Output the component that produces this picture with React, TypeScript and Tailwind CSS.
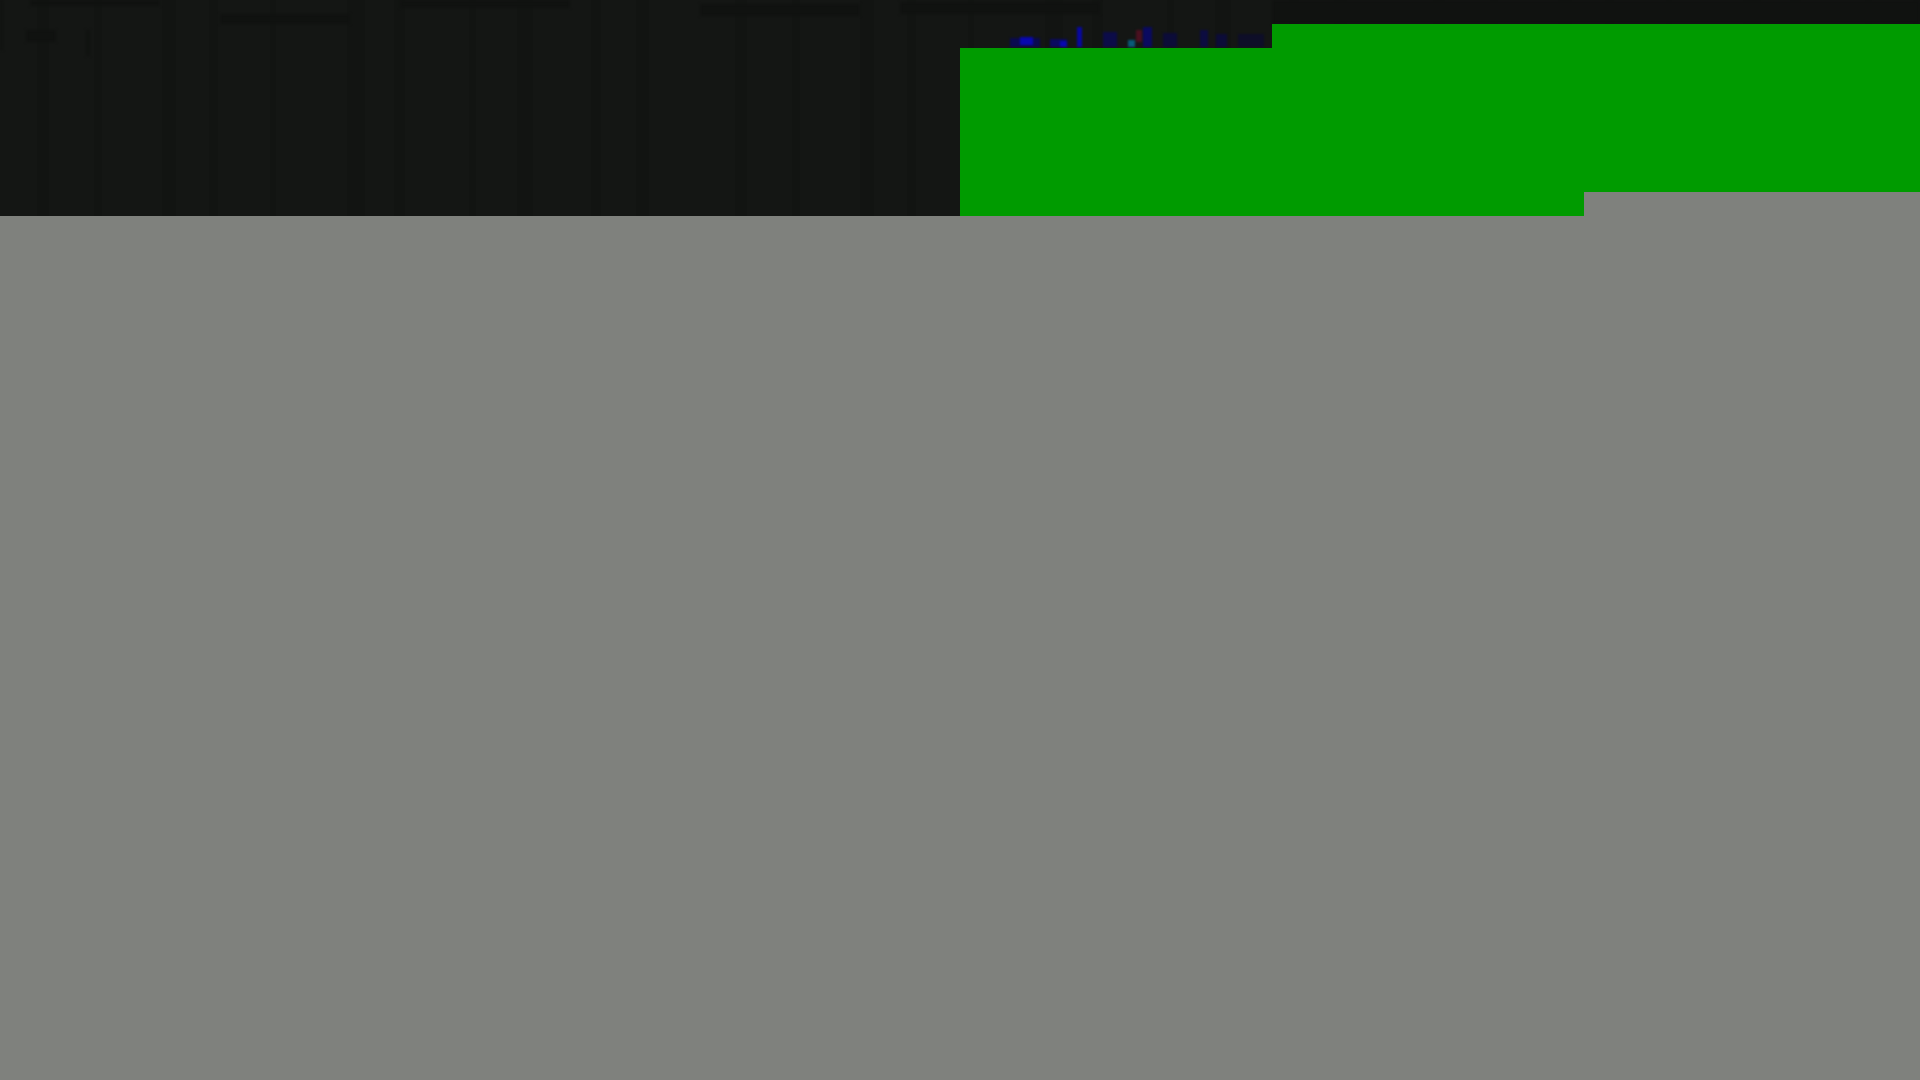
// faint vertical banding in the dark strip, widths are irregular in the source
const bands = [37, 12, 45, 8, 60, 14, 33, 9, 52, 6, 71, 18, 29, 11, 64, 7, 41, 16, 58, 10, 35, 13, 49];
let pos = 0;
const stops = bands
  .map((w, i) => {
    const c = i % 2 === 0 ? "#141614" : "#121412";
    const s = `${c} ${pos}px,${c} ${pos + w}px`;
    pos += w;
    return s;
  })
  .join(",");
const stripes = `repeating-linear-gradient(90deg,${stops})`;

// blue noise left over above the first green block
const smudges = [
  { x: 1010, y: 38, w: 30, h: 9, c: "#0a0a50" },
  { x: 1020, y: 37, w: 13, h: 8, c: "#0808b0" },
  { x: 1050, y: 39, w: 17, h: 8, c: "#0a0a60" },
  { x: 1060, y: 41, w: 7, h: 6, c: "#0808b0" },
  { x: 1077, y: 27, w: 5, h: 20, c: "#0808a0" },
  { x: 1103, y: 32, w: 14, h: 15, c: "#0c0c48" },
  { x: 1128, y: 40, w: 7, h: 7, c: "#0a5a78" },
  { x: 1136, y: 30, w: 6, h: 12, c: "#4a1020" },
  { x: 1143, y: 27, w: 9, h: 20, c: "#0a0a60" },
  { x: 1163, y: 33, w: 14, h: 14, c: "#0c0c38" },
  { x: 1200, y: 30, w: 8, h: 17, c: "#0c0c40" },
  { x: 1216, y: 34, w: 11, h: 13, c: "#0c0c38" },
  { x: 1238, y: 34, w: 26, h: 13, c: "#0e0e28" },
];

// darker text-like noise along the top edge
const noise = [
  { x: 0, y: 0, w: 3, h: 50 },
  { x: 30, y: 0, w: 130, h: 6 },
  { x: 26, y: 30, w: 30, h: 12 },
  { x: 86, y: 30, w: 4, h: 26 },
  { x: 220, y: 14, w: 130, h: 10 },
  { x: 400, y: 0, w: 170, h: 8 },
  { x: 700, y: 4, w: 160, h: 12 },
  { x: 900, y: 2, w: 200, h: 12 },
  { x: 1272, y: 0, w: 648, h: 24 },
];

const App = () => {
  return (
    <div className="flex h-[1080px] w-full flex-col overflow-hidden bg-[#7f817d]">
      <div className="relative flex h-[216px] w-full shrink-0" style={{ backgroundImage: stripes }}>
        <svg className="absolute left-0 top-0" width="1920" height="60" viewBox="0 0 1920 60">
          <defs>
            <filter id="soft" colorInterpolationFilters="sRGB">
              <feGaussianBlur stdDeviation="1.5" />
            </filter>
            <filter id="softer" colorInterpolationFilters="sRGB">
              <feGaussianBlur stdDeviation="0.8" />
            </filter>
          </defs>
          <g filter="url(#soft)">
            {noise.map((s, i) => (
              <rect key={i} x={s.x} y={s.y} width={s.w} height={s.h} fill="#101210" />
            ))}
          </g>
          <g filter="url(#softer)">
            {smudges.map((s, i) => (
              <rect key={i} x={s.x} y={s.y} width={s.w} height={s.h} fill={s.c} />
            ))}
          </g>
        </svg>
        <div className="w-[960px] shrink-0" />
        <div className="relative mt-[48px] w-[312px] shrink-0 bg-[#009b00]" />
        <div className="relative mt-[24px] w-[312px] shrink-0 bg-[#009b00]" />
        <div className="relative mt-[24px] flex flex-1 flex-col">
          <div className="flex-1 bg-[#009b00]" />
          <div className="h-[24px] bg-[#7f817d]" />
        </div>
      </div>
      <div className="flex-1" />
    </div>
  );
};

export default App;
